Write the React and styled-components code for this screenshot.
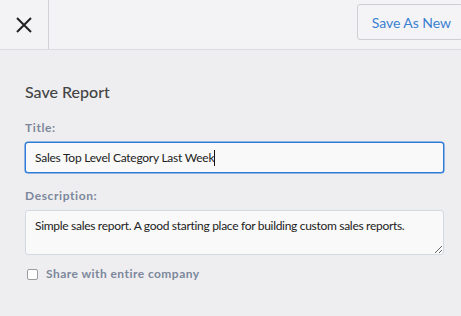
import React from "react";
import styled, { createGlobalStyle } from "styled-components";

const GlobalStyle = createGlobalStyle`
  html, body {
    margin: 0;
    padding: 0;
    background: #eeeef0;
    font-family: Lato, "Open Sans", sans-serif;
  }
`;

const Page = styled.div`
  width: 461px;
  height: 316px;
  overflow: hidden;
  background: #eeeef0;
`;

const Header = styled.div`
  display: flex;
  align-items: stretch;
  height: 49px;
  background: #f3f3f5;
  border-bottom: 1px solid #dcdce0;
`;

const CloseButton = styled.div`
  width: 48px;
  display: flex;
  align-items: center;
  justify-content: center;
  border-right: 1px solid #d2d2d6;
  color: #222;
`;

const Spacer = styled.div`
  flex: 1;
`;

const SaveNewButton = styled.button`
  align-self: flex-start;
  margin-top: 4px;
  margin-right: -2px;
  height: 36px;
  padding: 0 11px 0 14px;
  background: #f4f4f6;
  border: 1px solid #cfcfd3;
  border-radius: 3px;
  color: #3a7fd2;
  font-family: inherit;
  font-size: 14px;
  letter-spacing: -0.05px;
`;

const Body = styled.div`
  padding: 32px 17px 0 25px;
`;

const Heading = styled.h2`
  margin: 0 0 18px;
  font-size: 16px;
  line-height: 20px;
  font-weight: 500;
  color: #444;
`;

const Label = styled.div`
  font-size: 12px;
  line-height: 16px;
  font-weight: 700;
  letter-spacing: 0.6px;
  color: #7c879b;
  margin-bottom: 6px;
`;

const TitleField = styled.div`
  display: flex;
  align-items: center;
  height: 31px;
  box-sizing: border-box;
  padding: 0 9px;
  background: #f9f9f9;
  border: 1px solid #2f7bd6;
  border-radius: 3px;
  box-shadow: 0 0 0 0.5px #2f7bd6;
  font-size: 12px;
  letter-spacing: -0.25px;
  color: #222;
  margin-bottom: 15px;
`;

const Caret = styled.span`
  display: inline-block;
  width: 1px;
  height: 16px;
  background: #111;
`;

const Description = styled.textarea`
  display: block;
  width: 100%;
  height: 45px;
  box-sizing: border-box;
  padding: 6px 9px;
  background: #f9f9f9;
  border: 1px solid #d3d9e2;
  border-radius: 3px;
  font-family: inherit;
  font-size: 12px;
  letter-spacing: -0.3px;
  line-height: 17px;
  color: #222;
  outline: none;
  margin-bottom: 11px;
`;

const ShareRow = styled.label`
  display: flex;
  align-items: center;
  gap: 8px;
  padding-left: 2px;
  font-size: 12px;
  line-height: 16px;
  font-weight: 700;
  letter-spacing: 0.45px;
  color: #7c879b;
`;

const Box = styled.span`
  width: 9px;
  height: 9px;
  border: 1px solid #9a9a9f;
  border-radius: 2px;
  background: #fff;
`;

export default function App() {
  return (
    <Page>
      <GlobalStyle />
      <Header>
        <CloseButton>
          <svg width="16" height="16" viewBox="0 0 16 16">
            <path d="M1 1L15 15M15 1L1 15" stroke="#222" strokeWidth="2" />
          </svg>
        </CloseButton>
        <Spacer />
        <SaveNewButton>Save As New</SaveNewButton>
      </Header>
      <Body>
        <Heading>Save Report</Heading>
        <Label>Title:</Label>
        <TitleField>
          <span>Sales Top Level Category Last Week</span>
          <Caret />
        </TitleField>
        <Label>Description:</Label>
        <Description
          readOnly
          defaultValue="Simple sales report. A good starting place for building custom sales reports."
        />
        <ShareRow>
          <Box />
          Share with entire company
        </ShareRow>
      </Body>
    </Page>
  );
}
